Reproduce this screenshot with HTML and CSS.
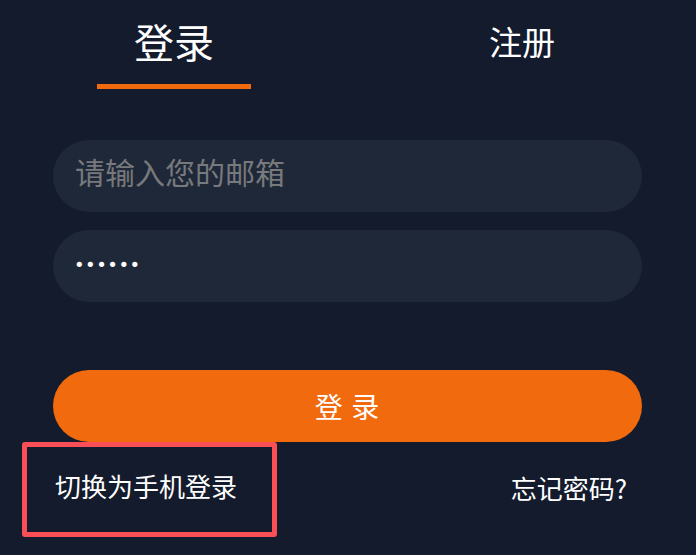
FILE: index.html
```html
<!DOCTYPE html>
<html lang="zh">
<head>
<meta charset="utf-8">
<title>登录</title>
<link rel="stylesheet" href="styles.css">
</head>
<body>
<div class="page">
  <div class="tabs">
    <div class="tab active">
      <span class="tab-label">登录</span>
      <span class="tab-bar"></span>
    </div>
    <div class="tab">
      <span class="tab-label">注册</span>
    </div>
  </div>
  <form class="form">
    <input class="field email" type="text" placeholder="请输入您的邮箱">
    <input class="field pwd" type="password" value="123456">
    <button class="submit" type="button">登 录</button>
  </form>
  <div class="links">
    <a class="link switch">切换为手机登录</a>
    <a class="link forgot">忘记密码?</a>
  </div>
</div>
</body>
</html>
```
FILE: styles.css
```css
html, body {
  margin: 0;
  padding: 0;
  background: #131b2d;
}
body {
  font-family: "Noto Sans CJK SC", "Noto Sans", sans-serif;
  color: #ffffff;
  width: 696px;
  height: 555px;
  overflow: hidden;
}
.page {
  display: flex;
  flex-direction: column;
}
.tabs {
  display: grid;
  grid-template-columns: 1fr 1fr;
  padding-top: 17px;
}
.tab {
  display: flex;
  flex-direction: column;
  align-items: center;
}
.tab-label {
  height: 48px;
  line-height: 48px;
  font-size: 33px;
}
.tab.active .tab-label {
  font-size: 40px;
}
.tab-bar {
  display: block;
  width: 154px;
  height: 5px;
  margin-top: 19px;
  background: #f26a0e;
}
.form {
  display: flex;
  flex-direction: column;
  width: 589px;
  margin: 51px 0 0 53px;
}
.field {
  box-sizing: border-box;
  height: 72px;
  border: none;
  outline: none;
  border-radius: 36px;
  background: #1f2838;
  padding: 0 22px;
  font-family: "Noto Sans CJK SC", sans-serif;
  font-size: 30px;
  color: #ffffff;
}
.field::placeholder {
  color: #77797c;
}
.email {
  padding-bottom: 10px;
}
.pwd {
  margin-top: 18px;
  padding-left: 21px;
  padding-bottom: 3px;
  font-family: "DejaVu Sans", sans-serif;
  font-size: 18px;
  letter-spacing: 0.5px;
}
.submit {
  margin-top: 68px;
  height: 72px;
  border: none;
  border-radius: 36px;
  background: #f26a0e;
  color: #ffffff;
  font-family: "Noto Sans CJK SC", sans-serif;
  font-size: 28px;
  letter-spacing: 1px;
  padding: 0;
}
.links {
  display: flex;
  justify-content: space-between;
  align-items: center;
  padding: 0 69px 0 22px;
}
.link {
  font-size: 26px;
  color: #ffffff;
  line-height: 36px;
}
.switch {
  box-sizing: border-box;
  width: 255px;
  height: 95px;
  border: 5px solid #fb4f57;
  border-radius: 3px;
  padding: 21px 0 0 28px;
}
.forgot {
  margin-top: -4px;
}
```
